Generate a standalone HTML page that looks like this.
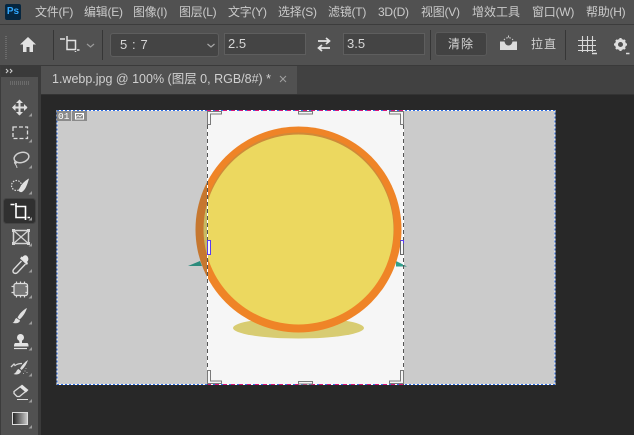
<!DOCTYPE html>
<html><head><meta charset="utf-8">
<style>
html,body{margin:0;padding:0;width:634px;height:435px;overflow:hidden;background:#282828;}
body{position:relative;font-family:"Liberation Sans","Noto Sans CJK SC",sans-serif;color:#cfcfcf;}
.a{position:absolute;white-space:nowrap;}
.m{position:absolute;top:3px;font-size:12px;line-height:18px;color:#cacaca;white-space:nowrap;letter-spacing:-.25px;}
.box{position:absolute;box-sizing:border-box;background:#444;border:1px solid #5e5e5e;font-size:13px;color:#d6d6d6;}
.sep{position:absolute;width:1px;background:#363636;top:30px;height:30px;}
svg{position:absolute;left:0;top:0;}
</style></head><body>
<div class="a" style="left:0;top:0;width:634px;height:24px;background:#515151"></div>
<div class="a" style="left:0;top:24px;width:634px;height:1px;background:#3c3c3c"></div>
<div class="a" style="left:0;top:25px;width:634px;height:40px;background:#515151"></div>
<div class="a" style="left:0;top:65px;width:634px;height:1px;background:#3a3a3a"></div>
<div class="a" style="left:0;top:66px;width:634px;height:29px;background:#414141"></div>
<div class="a" style="left:0;top:94px;width:634px;height:1px;background:#333"></div>
<div class="a" style="left:41px;top:66px;width:256px;height:28px;background:#515151;font-size:12.500px;line-height:27px;color:#d0d0d0;padding-left:11px;box-sizing:border-box">1.webp.jpg @ 100% (图层 0, RGB/8#) *</div>
<div class="a" style="left:0;top:66px;width:38px;height:369px;background:#515151"></div>
<div class="a" style="left:0;top:66px;width:38px;height:11px;background:#3a3a3a"></div>
<div class="a" style="left:0;top:66px;width:1px;height:369px;background:#3c3c3c"></div>
<div class="a" style="left:38px;top:66px;width:3px;height:369px;background:#3a3a3a"></div>

<div class="a" style="left:5px;top:4px;width:16px;height:16px;background:#06263f;border-radius:2px;color:#31a8ff;font-size:10px;font-weight:bold;line-height:16px;text-align:center">Ps</div>
<span class="m" style="left:35px">文件(F)</span>
<span class="m" style="left:84px">编辑(E)</span>
<span class="m" style="left:133px">图像(I)</span>
<span class="m" style="left:179px">图层(L)</span>
<span class="m" style="left:228px">文字(Y)</span>
<span class="m" style="left:278px">选择(S)</span>
<span class="m" style="left:328px">滤镜(T)</span>
<span class="m" style="left:378px">3D(D)</span>
<span class="m" style="left:421px">视图(V)</span>
<span class="m" style="left:472px;letter-spacing:0">增效工具</span>
<span class="m" style="left:532px">窗口(W)</span>
<span class="m" style="left:586px">帮助(H)</span>

<div class="sep" style="left:53px"></div>
<div class="sep" style="left:102px"></div>
<div class="sep" style="left:430px"></div>
<div class="sep" style="left:565px"></div>
<div class="box" style="left:110px;top:33px;width:109px;height:24px;border-radius:3px;line-height:22px;padding-left:9px;letter-spacing:.6px">5 : 7</div>
<div class="box" style="left:224px;top:33px;width:82px;height:22px;line-height:20px;padding-left:3px">2.5</div>
<div class="box" style="left:343px;top:33px;width:82px;height:22px;line-height:20px;padding-left:3px">3.5</div>
<div class="box" style="left:435px;top:32px;width:52px;height:24px;border-radius:3px;line-height:22px;text-align:center;letter-spacing:1px;border-color:#5a5a5a;background:#424242;font-size:12px">清除</div>
<div class="a" style="left:531px;top:35px;font-size:12px;line-height:18px;letter-spacing:1px;color:#cfcfcf">拉直</div>

<svg width="634" height="435" viewBox="0 0 634 435" fill="none">
<!-- collapse arrows -->
<path d="M6 69l2 2-2 2M10 69l2 2-2 2" stroke="#cfcfcf" stroke-width="1.100"/>
<!-- grip -->
<path d="M6 36v24" stroke="#6b6b6b" stroke-width="2" stroke-dasharray="1 1"/>
<path d="M10 83h19" stroke="#6b6b6b" stroke-width="4" stroke-dasharray="1 1"/>
<!-- home -->
<path d="M28 37l8 7.500h-3V52h-3.500v-5h-3v5H23v-7.500h-3z" fill="#e2e2e2"/>
<!-- crop option icon -->
<path d="M60 39h5M67 36v5M67 40.500h8.500V50M67 41v8.500h8.500M77 50h2.500M75.500 51v1" stroke="#e2e2e2" stroke-width="1.500"/>
<path d="M87 44l3.500 3 3.500-3" stroke="#9a9a9a" stroke-width="1.200"/>
<path d="M207.500 44l3.500 3 3.500-3" stroke="#a8a8a8" stroke-width="1.200"/>
<!-- swap -->
<path d="M318 41h11M326 38l3.500 3-3.500 3M330 48h-11M322 45l-3.500 3 3.500 3" stroke="#e2e2e2" stroke-width="1.700"/>
<!-- level -->
<path d="M500 41.500h4.500c.5 2.500 2 4 4 4s3.500-1.500 4-4h4.500V50h-17z" fill="#dcdcdc"/>
<path d="M504 40a5.500 5.500 0 0 1 9 0" stroke="#d0d0d0" stroke-dasharray="1.500 1.500"/>
<path d="M508.500 35.500v2" stroke="#d0d0d0"/>
<!-- grid -->
<path d="M582.500 36v16M587.500 36v16M592.500 36v16M578 40.500h18M578 45.500h18M578 50.500h18" stroke="#d8d8d8" stroke-width="1.100"/>
<path d="M592 53.500h5" stroke="#dcdcdc" stroke-width="1.500"/>
<!-- gear -->
<circle cx="620.500" cy="44.500" r="4" stroke="#dedede" stroke-width="3"/>
<path d="M620.500 38v13M614 44.500h13M616 40l9 9M625 40l-9 9" stroke="#dedede" stroke-width="2.200" stroke-dasharray="2 9"/>
<path d="M626 53.500h3.500" stroke="#dcdcdc" stroke-width="1.500"/>
<!-- tab close -->
<path d="M280 76l6 6M286 76l-6 6" stroke="#a0a0a0" stroke-width="1"/>

<!-- active tool -->
<rect x="3.500" y="198.500" width="32" height="25" rx="3" fill="#303030" stroke="#444"/>
<!-- corner triangles -->
<path d="M32 113v3.500h-3.500zM32 139v3.500h-3.500zM32 165v3.500h-3.500zM32 191v3.500h-3.500zM32 217v3.500h-3.500zM32 243v3.500h-3.500zM32 269v3.500h-3.500zM32 295v3.500h-3.500zM32 321v3.500h-3.500zM32 347v3.500h-3.500zM32 373v3.500h-3.500zM32 399v3.500h-3.500zM32 425v3.500h-3.500z" fill="#9c9c9c"/>
<!-- move -->
<path d="M19.500 101v14M13 107.500h14" stroke="#dedede" stroke-width="2"/>
<path d="M19.500 99.500l-3.500 3.500h7zM19.500 115.500l-3.500-3.500h7zM12 107.500l3.500-3.500v7zM27.500 107.500l-3.500-3.500v7z" fill="#dedede"/>
<!-- marquee -->
<rect x="13" y="127" width="14.500" height="11.500" stroke="#dcdcdc" stroke-width="1.300" stroke-dasharray="4 2"/>
<!-- lasso -->
<ellipse cx="21.500" cy="157.500" rx="7.500" ry="5" transform="rotate(-15 21.500 157.500)" stroke="#cfcfcf" stroke-width="1.500"/>
<circle cx="15.500" cy="162.500" r="1.500" fill="#cfcfcf"/>
<path d="M15 163c0 2 2 2 2 5" stroke="#cfcfcf"/>
<!-- quick select -->
<circle cx="16.500" cy="185.500" r="5" stroke="#dcdcdc" stroke-width="1.200" stroke-dasharray="1.500 1.300"/>
<path d="M29 178.500c-3 1.500-7 5-8.500 8l-2 3.500c0 1.500 2 2.500 3.500 2 3-2 5-6 7-13.500z" fill="#e2e2e2"/>
<!-- crop active -->
<path d="M10.500 204.500h4M16 203v4" stroke="#fff" stroke-width="1.600"/>
<path d="M16 205v12.500h9.500V206.500H16" stroke="#fff" stroke-width="1.600"/>
<path d="M25.500 217v3M27.500 217.500h2.500" stroke="#fff" stroke-width="1.600"/>
<!-- frame -->
<rect x="13.500" y="230.500" width="15" height="13" stroke="#d4d4d4" stroke-width="1.500"/>
<path d="M13 230l16 14M29 230l-16 14" stroke="#d4d4d4" stroke-width="1.200"/>
<path d="M12 229h3v3h-3zM27 229h3v3h-3zM12 242h3v3h-3zM27 242h3v3h-3z" fill="#d4d4d4"/>
<!-- eyedropper -->
<path d="M21.500 261l-8 8.500c-1 1.500-.5 3 .5 3.500s2.500.5 3.500-.5l8-8.500" stroke="#dcdcdc" stroke-width="1.400"/>
<path d="M20 258.500l7 6.500 1-2-1-1c2-2 1.500-4 .5-5.500s-3-2-5 .5l-1-.5z" fill="#e6e6e6"/>
<!-- patch -->
<rect x="14" y="283.500" width="13.500" height="12" rx="2" fill="#767676" stroke="#ddd" stroke-width="1.300"/>
<path d="M16.500 281.500v16M20.500 281.500v16M24.500 281.500v16M11.500 286.500h18M11.500 292.500h18" stroke="#ddd" stroke-width="1.200" stroke-dasharray="2.500 11.500"/>
<!-- brush -->
<path d="M27 308c-4 2-7 5-9.500 9.500l2 2c3.500-3 6-7 7.500-11.500z" fill="#e0e0e0"/><path d="M16.500 318c-2 .5-1.500 4-4 5 3 .5 7 .5 7.500-2.500z" fill="#e0e0e0"/>
<!-- stamp -->
<circle cx="20.500" cy="337.500" r="3.500" fill="#e4e4e4"/><path d="M19 340h3v3h5c1 0 1.500 1 1.500 3.500h-14.500c0-2.500 .5-3.500 1.500-3.500h4z" fill="#e4e4e4"/><path d="M14 348.500h13" stroke="#e4e4e4" stroke-width="1.200"/>
<!-- history brush -->
<path d="M28 360c-3 2-6 5-8 8.500l1.500 1.500c3-2.500 5-6 6.500-10z" fill="#dedede"/><path d="M18.500 369c-2 .5-2 4-5 5 3 1 7 .5 7.500-3z" fill="#dedede"/><path d="M11 367l3-3 1 1.500c2-1.500 4-2 7-2" stroke="#d4d4d4" stroke-width="1.300"/><path d="M26 368v1M24.500 371h1M23 373.500h1M27 372v1" stroke="#aaa"/>
<!-- eraser -->
<path d="M14 391.500l8-6 5.500 4.500-8 6.500h-2.500l-3-3z" stroke="#dcdcdc" stroke-width="1.300"/><path d="M20 387.500l6 5 2-2-5.500-5.500z" fill="#e4e4e4"/><path d="M17 399.500h11" stroke="#dcdcdc"/>
<!-- gradient -->
<defs><linearGradient id="g" x1="0" x2="1"><stop offset="0" stop-color="#222"/><stop offset="1" stop-color="#ccc"/></linearGradient></defs>
<rect x="12.500" y="412.500" width="15" height="12" fill="url(#g)" stroke="#ddd"/>

<!-- canvas -->
<rect x="57" y="110" width="498" height="275" fill="#cbcbcb"/>
<rect x="207" y="110" width="197" height="275" fill="#f6f6f6"/>
<defs><clipPath id="c"><rect x="207.500" y="110" width="196.500" height="275"/></clipPath>
<clipPath id="o"><path d="M57 110h150.500v275H57zM404 110h151v275H404z"/></clipPath></defs>
<g clip-path="url(#c)">
<ellipse cx="298.500" cy="328" rx="65.500" ry="10.500" fill="#d8cc72"/>
<path d="M396 261l11 5.500h-11z" fill="#2f9f8c"/>
<circle cx="298.500" cy="229.500" r="103" fill="#ef8427"/>
<circle cx="298.500" cy="228" r="95.500" fill="#cf8a38"/>
<circle cx="298.500" cy="229.500" r="95" fill="#ecd85f"/>
</g>
<g clip-path="url(#o)">
<path d="M188 266l12-5 2 5z" fill="#2b8b7c"/>
<path d="M396 261l11 5.500h-11z" fill="#2b8b7c"/>
<circle cx="298.500" cy="229.500" r="103" fill="#c6772f"/>
<circle cx="298.500" cy="229.500" r="95" fill="#c8ba62"/>
</g>
<!-- selection marching ants -->
<rect x="57" y="110.500" width="498" height="274" stroke="#fff"/>
<rect x="57" y="110.500" width="498" height="274" stroke="#2f6fe8" stroke-dasharray="2 2"/>
<path d="M207 110.500h197M207 384.500h197" stroke="#d6157a" stroke-dasharray="4 4"/>
<!-- crop borders -->
<path d="M207.500 111v274M403.500 111v274" stroke="#fff"/>
<path d="M207.500 111v274M403.500 111v274" stroke="#555" stroke-dasharray="4 3"/>
<!-- handles -->
<path d="M207.500 124.500v-13h14v2.500h-11v10.500z" fill="#f6f6f6" stroke="#7a7a7a"/>
<path d="M403.500 124.500v-13h-14v2.500h11v10.500z" fill="#f6f6f6" stroke="#7a7a7a"/>
<path d="M207.500 370.500v13h14v-2.500h-11v-10.500z" fill="#f6f6f6" stroke="#7a7a7a"/>
<path d="M403.500 370.500v13h-14v-2.500h11v-10.500z" fill="#f6f6f6" stroke="#7a7a7a"/>
<path d="M298.500 111.500h14v2.500h-14z" fill="#f6f6f6" stroke="#7a7a7a"/>
<path d="M298.500 381.500h14v2.500h-14z" fill="#f6f6f6" stroke="#7a7a7a"/>
<rect x="207.500" y="240.500" width="3" height="14" fill="#f6f6f6" stroke="#5a3df0"/>
<rect x="400.500" y="240.500" width="3" height="14" fill="#f6f6f6" stroke="#666"/>
<path d="M400.500 240.500h3v3" stroke="#5a3df0"/>
<!-- slice badge -->
<rect x="57" y="111" width="14" height="10" fill="#8a8a8a"/>
<rect x="72" y="111" width="15" height="10" fill="#8a8a8a"/>
<rect x="75.500" y="113.500" width="8" height="5.500" stroke="#fff"/>
<path d="M76 117.500l2-2 2 1.500 3-3" stroke="#fff" stroke-width=".8"/>
<text x="58" y="119" font-family="Liberation Mono, monospace" font-size="9.500" fill="#fff">01</text>
</svg>
</body></html>
